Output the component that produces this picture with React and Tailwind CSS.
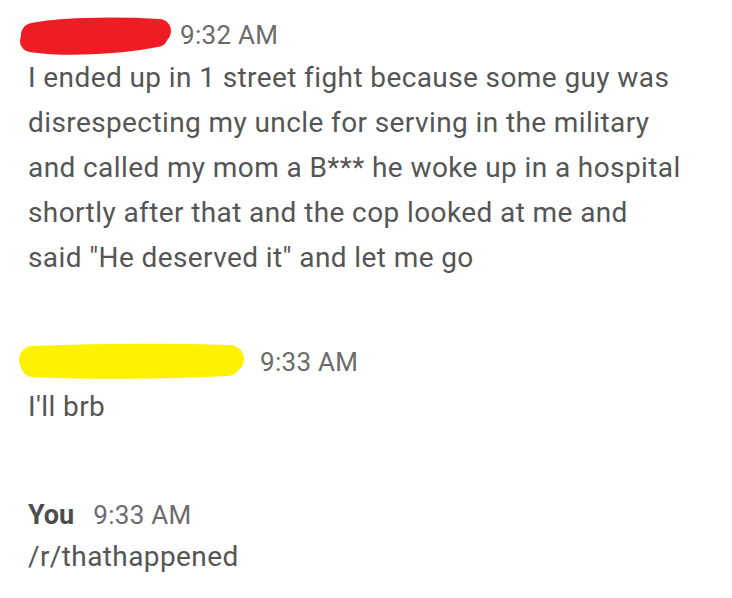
import React from "react";

function RedScribble() {
  return (
    <svg width="160" height="40" viewBox="0 0 160 40" className="shrink-0">
      <path
        d="M17 20 C40 15, 90 13, 143 16"
        stroke="#ee1c24"
        strokeWidth="24"
        strokeLinecap="round"
        fill="none"
      />
      <path
        d="M15 26 C50 31, 100 29, 141 21"
        stroke="#ee1c24"
        strokeWidth="22"
        strokeLinecap="round"
        fill="none"
      />
    </svg>
  );
}

function YellowScribble() {
  return (
    <svg width="232" height="44" viewBox="0 0 232 44" className="shrink-0">
      <path
        d="M17 20 C70 18, 150 17, 214 19"
        stroke="#fff200"
        strokeWidth="28"
        strokeLinecap="round"
        fill="none"
      />
      <path
        d="M17 25 C70 28, 150 27, 212 24"
        stroke="#fff200"
        strokeWidth="24"
        strokeLinecap="round"
        fill="none"
      />
    </svg>
  );
}

export default function App() {
  return (
    <div
      className="w-[732px] h-[598px] bg-white overflow-hidden text-[#555555]"
      style={{ fontFamily: "Roboto, 'Liberation Sans', sans-serif" }}
    >
      <div className="pl-[28px] pt-[15px]">
        {/* message 1 */}
        <div className="h-[40px] flex items-center -ml-[12px]">
          <RedScribble />
          <span className="ml-[4px] text-[26px] tracking-[0.3px] text-[#6b6b6b]">9:32 AM</span>
        </div>
        <p className="text-[28px] tracking-[0.4px] leading-[45px] w-[700px]">
          I ended up in 1 street fight because some guy was
          <br />
          disrespecting my uncle for serving in the military
          <br />
          and called my mom a B*** he woke up in a hospital
          <br />
          shortly after that and the cop looked at me and
          <br />
          said "He deserved it" and let me go
        </p>

        {/* message 2 */}
        <div className="mt-[60px] h-[44px] flex items-center -ml-[12px]">
          <YellowScribble />
          <span className="ml-[12px] text-[26px] tracking-[0.3px] text-[#6b6b6b]">9:33 AM</span>
        </div>
        <p className="text-[28px] tracking-[0.4px] leading-[45px]">I'll brb</p>

        {/* message 3 */}
        <div className="mt-[67px] h-[38px] flex items-center gap-[19px]">
          <span className="text-[27px] font-bold text-[#4d4d4d]">You</span>
          <span className="text-[26px] tracking-[0.3px] text-[#6b6b6b]">9:33 AM</span>
        </div>
        <p className="text-[28px] tracking-[0.4px] leading-[45px]">/r/thathappened</p>
      </div>
    </div>
  );
}
